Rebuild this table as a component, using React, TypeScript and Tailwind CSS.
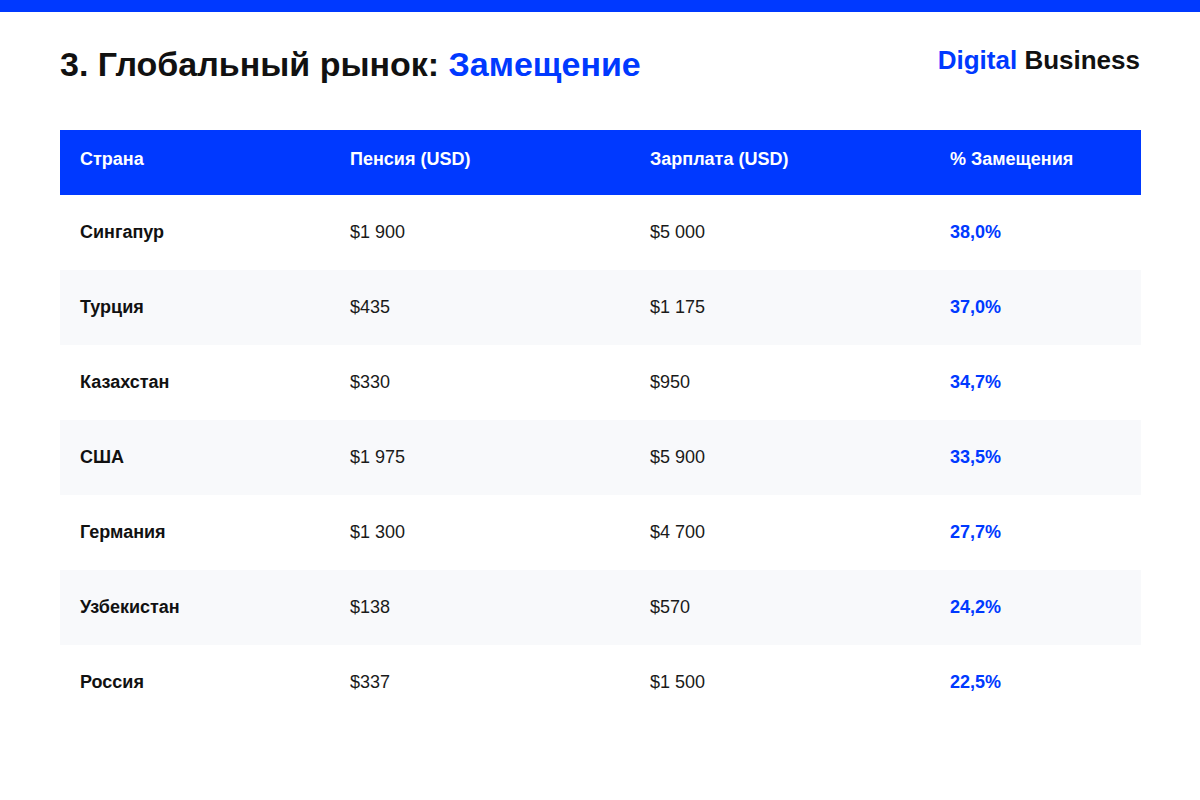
const rows = [
  { country: "Сингапур", pension: "$1 900", salary: "$5 000", rate: "38,0%" },
  { country: "Турция", pension: "$435", salary: "$1 175", rate: "37,0%" },
  { country: "Казахстан", pension: "$330", salary: "$950", rate: "34,7%" },
  { country: "США", pension: "$1 975", salary: "$5 900", rate: "33,5%" },
  { country: "Германия", pension: "$1 300", salary: "$4 700", rate: "27,7%" },
  { country: "Узбекистан", pension: "$138", salary: "$570", rate: "24,2%" },
  { country: "Россия", pension: "$337", salary: "$1 500", rate: "22,5%" },
];

const cols = "grid grid-cols-[270px_300px_300px_1fr]";

export default function App() {
  return (
    <div className="h-[800px] w-[1200px] bg-white font-['Liberation_Sans',Arial,sans-serif] text-[#111111]">
      <div className="h-[12px] bg-[#0039ff]" />

      <div className="flex items-start justify-between px-[60px] pt-[32px]">
        <h1 className="text-[34px] font-bold leading-[40px]">
          3. Глобальный рынок: <span className="text-[#0039ff]">Замещение</span>
        </h1>
        <div className="pt-[1px] text-[26px] font-bold leading-[30px]">
          <span className="text-[#0039ff]">Digital</span> Business
        </div>
      </div>

      <div className="mx-[60px] mt-[46px] w-[1081px]">
        <div className={`${cols} h-[65px] bg-[#0039ff] text-[18px] font-bold leading-[25px] text-white`}>
          <div className="pl-5 pt-[17px]">Страна</div>
          <div className="pl-5 pt-[17px]">Пенсия (USD)</div>
          <div className="pl-5 pt-[17px]">Зарплата (USD)</div>
          <div className="pl-5 pt-[17px]">% Замещения</div>
        </div>

        {rows.map((row, i) => (
          <div
            key={row.country}
            className={`${cols} h-[75px] items-center text-[18px] leading-[25px] ${i % 2 === 1 ? "bg-[#f8f9fb]" : "bg-white"}`}
          >
            <div className="pl-5 pb-[1px] font-bold">{row.country}</div>
            <div className="pl-5 pb-[1px] text-[#1a1a1a]">{row.pension}</div>
            <div className="pl-5 pb-[1px] text-[#1a1a1a]">{row.salary}</div>
            <div className="pl-5 pb-[1px] font-bold text-[#0039ff]">{row.rate}</div>
          </div>
        ))}
      </div>
    </div>
  );
}
